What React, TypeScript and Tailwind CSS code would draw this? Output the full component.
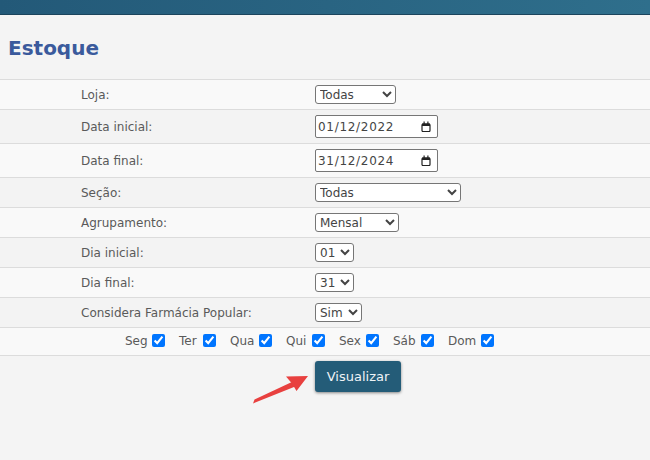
import type { ReactNode } from 'react'

const font = { fontFamily: '"DejaVu Sans", Verdana, sans-serif' }

const selectCls =
  'h-[19px] border border-[#767676] rounded-[3px] bg-white text-[12px] text-[#444] pl-0 outline-none'

function Row({ label, shade, h, children }: { label: string; shade: boolean; h: string; children: ReactNode }) {
  return (
    <div className={`flex items-center border-t border-[#dcdcdc] ${h} ${shade ? 'bg-[#f3f3f3]' : 'bg-[#f9f9f9]'}`}>
      <div className="w-[315px] shrink-0 pl-[81px] text-[12px] text-[#5a5a5a]">{label}</div>
      <div className="flex items-center">{children}</div>
    </div>
  )
}

// pt-BR date field, drawn like Chrome's native date input
function DateField({ value }: { value: string }) {
  return (
    <div className="flex items-center justify-between w-[123px] h-[23px] border border-[#767676] rounded-[2px] bg-white pl-[2px] pr-[6px]">
      <span className="text-[12px] tracking-[0.7px] text-[#444]">{value}</span>
      <svg width="10" height="11" viewBox="0 0 10 11">
        <rect x="1" y="3" width="8" height="7.5" rx="1" fill="none" stroke="#222" strokeWidth="1.2" />
        <rect x="1" y="2.5" width="8" height="2.5" fill="#222" />
        <rect x="2.5" y="0.5" width="1.2" height="2.5" fill="#222" />
        <rect x="6.3" y="0.5" width="1.2" height="2.5" fill="#222" />
      </svg>
    </div>
  )
}

const days = [
  { d: 'Seg', w: 'w-[23px]' },
  { d: 'Ter', w: 'w-[20px]' },
  { d: 'Qua', w: 'w-[25px]' },
  { d: 'Qui', w: 'w-[22px]' },
  { d: 'Sex', w: 'w-[23px]' },
  { d: 'Sáb', w: 'w-[24px]' },
  { d: 'Dom', w: 'w-[29px]' },
]

export default function App() {
  return (
    <div className="relative w-[650px] h-[460px] overflow-hidden bg-[#f4f4f4]" style={font}>
      {/* Top bar */}
      <div className="h-[15px] bg-gradient-to-r from-[#235978] to-[#2f6f8c] border-b border-[#1b445c]" />

      {/* Title */}
      <div className="h-[64px] pt-[21px] pl-[8px]">
        <h1 className="text-[20px] leading-[24px] font-bold text-[#3a5a9c] whitespace-nowrap">Estoque</h1>
      </div>

      {/* Form */}
      <div>
        <Row label="Loja:" shade={false} h="h-[30px]">
          <select className={`${selectCls} w-[81px] h-[18px]`} defaultValue="Todas">
            <option>Todas</option>
          </select>
        </Row>
        <Row label="Data inicial:" shade h="h-[34px]">
          <DateField value="01/12/2022" />
        </Row>
        <Row label="Data final:" shade={false} h="h-[34px]">
          <DateField value="31/12/2024" />
        </Row>
        <Row label="Seção:" shade h="h-[30px]">
          <select className={`${selectCls} w-[146px]`} defaultValue="Todas">
            <option>Todas</option>
          </select>
        </Row>
        <Row label="Agrupamento:" shade={false} h="h-[30px]">
          <select className={`${selectCls} w-[84px]`} defaultValue="Mensal">
            <option>Mensal</option>
          </select>
        </Row>
        <Row label="Dia inicial:" shade h="h-[30px]">
          <select className={`${selectCls} w-[39px]`} defaultValue="01">
            <option>01</option>
          </select>
        </Row>
        <Row label="Dia final:" shade={false} h="h-[30px]">
          <select className={`${selectCls} w-[39px]`} defaultValue="31">
            <option>31</option>
          </select>
        </Row>
        <Row label="Considera Farmácia Popular:" shade h="h-[30px]">
          <select className={`${selectCls} w-[47px]`} defaultValue="Sim">
            <option>Sim</option>
          </select>
        </Row>

        {/* Weekdays */}
        <div className="flex items-center gap-[14px] h-[29px] pl-[125px] pb-[2px] border-y border-[#dcdcdc] bg-[#f9f9f9]">
          {days.map(({ d, w }) => (
            <label key={d} className="flex items-center gap-[4px] text-[12px] text-[#5a5a5a]">
              <span className={`${w} whitespace-nowrap`}>{d}</span>
              <input type="checkbox" defaultChecked className="w-[13px] h-[13px]" />
            </label>
          ))}
        </div>

        {/* Submit */}
        <div className="pl-[315px] pt-[5px]">
          <button className="w-[86px] h-[31px] rounded-[3px] bg-[#245c78] text-[13px] text-[#eef3f6] shadow-[0_1px_3px_rgba(0,0,0,0.45)]">
            Visualizar
          </button>
        </div>
      </div>

      {/* Red arrow annotation */}
      <svg className="absolute left-[250px] top-[370px]" width="64" height="38" viewBox="0 0 64 38">
        <polygon points="3,33.5 4.5,29.5 44,11 46.5,16" fill="#e8403f" />
        <polygon points="58,6 36,6.5 42,13.5 46.5,21" fill="#e8403f" />
      </svg>
    </div>
  )
}
